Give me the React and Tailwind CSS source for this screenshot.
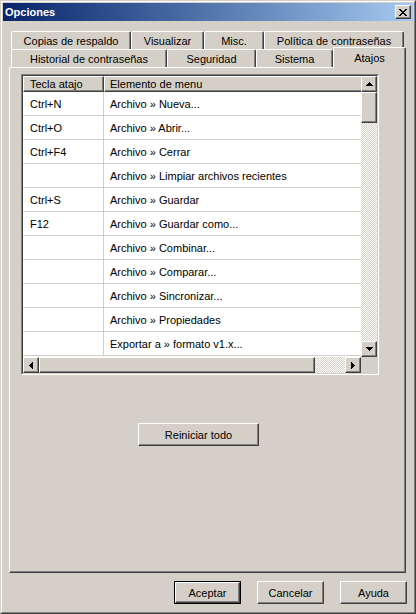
import React from 'react';

const raised =
  'border border-t-white border-l-white border-r-[#404040] border-b-[#404040] shadow-[inset_-1px_-1px_0_#808080] bg-[#d4d0c8]';
const checker =
  'bg-[image:repeating-conic-gradient(#d4d0c8_0%_25%,#ffffff_0%_50%)] bg-[length:2px_2px]';

const rows = [
  ['Ctrl+N', 'Archivo » Nueva...'],
  ['Ctrl+O', 'Archivo » Abrir...'],
  ['Ctrl+F4', 'Archivo » Cerrar'],
  ['', 'Archivo » Limpiar archivos recientes'],
  ['Ctrl+S', 'Archivo » Guardar'],
  ['F12', 'Archivo » Guardar como...'],
  ['', 'Archivo » Combinar...'],
  ['', 'Archivo » Comparar...'],
  ['', 'Archivo » Sincronizar...'],
  ['', 'Archivo » Propiedades'],
  ['', 'Exportar a » formato v1.x...'],
];

const Arrow = ({ dir }) => {
  // classic 7x4 triangle made of pixel rows
  const bars = [1, 3, 5, 7];
  if (dir === 'up' || dir === 'down') {
    const order = dir === 'up' ? bars : [...bars].reverse();
    return (
      <svg width="7" height="4" viewBox="0 0 7 4" shapeRendering="crispEdges">
        {order.map((w, i) => (
          <rect key={i} x={(7 - w) / 2} y={i} width={w} height="1" fill="#000" />
        ))}
      </svg>
    );
  }
  const order = dir === 'left' ? bars : [...bars].reverse();
  return (
    <svg width="4" height="7" viewBox="0 0 4 7" shapeRendering="crispEdges">
      {order.map((h, i) => (
        <rect key={i} x={i} y={(7 - h) / 2} width="1" height={h} fill="#000" />
      ))}
    </svg>
  );
};

const CloseGlyph = () => {
  const px = [
    [0, 0], [1, 0], [6, 0], [7, 0],
    [1, 1], [2, 1], [5, 1], [6, 1],
    [2, 2], [3, 2], [4, 2], [5, 2],
    [3, 3], [4, 3],
    [2, 4], [3, 4], [4, 4], [5, 4],
    [1, 5], [2, 5], [5, 5], [6, 5],
    [0, 6], [1, 6], [6, 6], [7, 6],
  ];
  return (
    <svg width="8" height="7" viewBox="0 0 8 7" shapeRendering="crispEdges">
      {px.map(([x, y]) => (
        <rect key={`${x}-${y}`} x={x} y={y} width="1" height="1" fill="#000" />
      ))}
    </svg>
  );
};

const Tab = ({ label, width }) => (
  <div
    className={`flex h-[18px] shrink-0 items-center justify-center rounded-t-[2px] border-t border-l border-r border-t-white border-l-white border-r-[#404040] pt-[1px] shadow-[inset_-1px_0_0_#808080] ${width}`}
  >
    {label}
  </div>
);

const ScrollButton = ({ dir }) => (
  <div className={`flex h-[16px] w-[16px] shrink-0 items-center justify-center ${raised}`}>
    <Arrow dir={dir} />
  </div>
);

const Button = ({ children, isDefault, width = 'w-[67px]' }) => (
  <div className={`${width} h-[23px] ${isDefault ? 'border border-black' : ''}`}>
    <div className={`flex h-full w-full items-center justify-center pt-[1px] ${raised}`}>{children}</div>
  </div>
);

const App = () => {
  return (
    <div className="h-[614px] w-[416px] border border-t-[#d4d0c8] border-l-[#d4d0c8] border-r-[#404040] border-b-[#404040] bg-[#d4d0c8] font-['Liberation_Sans',Arial,sans-serif] text-[11px] leading-none text-black">
      <div className="h-full w-full border border-t-white border-l-white border-r-[#808080] border-b-[#808080] p-[1px]">
        {/* title bar */}
        <div className="flex h-[18px] items-center justify-between bg-gradient-to-r from-[#0a246a] to-[#a6caf0] pl-[2px] pr-[2px]">
          <span className="text-[11px] font-bold text-white">Opciones</span>
          <div className={`flex h-[14px] w-[16px] items-center justify-center ${raised}`}>
            <CloseGlyph />
          </div>
        </div>

        {/* tab control */}
        <div className="ml-[6px] mt-[10px] w-[397px]">
          <div className="flex pl-[2px]">
            <Tab label="Copias de respaldo" width="w-[120px]" />
            <Tab label="Visualizar" width="w-[73px]" />
            <Tab label="Misc." width="w-[60px]" />
            <Tab label="Política de contraseñas" width="w-[140px]" />
          </div>
          <div className="flex h-[18px] pl-[2px]">
            <Tab label="Historial de contraseñas" width="w-[156px]" />
            <Tab label="Seguridad" width="w-[89px]" />
            <Tab label="Sistema" width="w-[77px]" />
            <div className="relative z-10 -mt-[2px] flex h-[21px] w-[73px] shrink-0 items-start justify-center rounded-t-[2px] border-t border-l border-r border-t-white border-l-white border-r-[#404040] bg-[#d4d0c8] pt-[5px] shadow-[inset_-1px_0_0_#808080]">
              Atajos
            </div>
          </div>

          <div className="h-[506px] border border-t-white border-l-white border-r-[#404040] border-b-[#404040] pl-[11px] pt-[6px] shadow-[inset_-1px_-1px_0_#808080]">
            {/* list view */}
            <div className="h-[301px] w-[358px] border border-t-[#808080] border-l-[#808080] border-r-white border-b-white">
              <div className="flex h-full w-full flex-col border border-t-[#404040] border-l-[#404040] border-r-[#d4d0c8] border-b-[#d4d0c8]">
                <div className="flex h-[281px]">
                  <div className="w-[338px] overflow-hidden bg-white">
                    <div className="flex h-[16px] w-[420px]">
                      <div className={`flex w-[81px] shrink-0 items-center pl-[6px] pt-[1px] ${raised}`}>Tecla atajo</div>
                      <div className={`flex w-[339px] shrink-0 items-center pl-[5px] pt-[1px] ${raised}`}>Elemento de menu</div>
                    </div>
                    {rows.map(([key, item]) => (
                      <div key={item} className="flex h-[24px] w-[420px] border-b border-[#d4d0c8] pt-[2px]">
                        <div className="-mt-[2px] flex w-[81px] shrink-0 items-center border-r border-[#d4d0c8] pl-[7px] pt-[2px]">{key}</div>
                        <div className="flex flex-1 items-center pl-[6px]">{item}</div>
                      </div>
                    ))}
                  </div>
                  <div className="flex w-[16px] flex-col">
                    <ScrollButton dir="up" />
                    <div className={`h-[31px] w-[16px] ${raised}`} />
                    <div className={`flex-1 ${checker}`} />
                    <ScrollButton dir="down" />
                  </div>
                </div>
                <div className="flex h-[16px]">
                  <ScrollButton dir="left" />
                  <div className={`h-[16px] w-[276px] ${raised}`} />
                  <div className={`w-[30px] ${checker}`} />
                  <ScrollButton dir="right" />
                  <div className="w-[16px] bg-[#d4d0c8]" />
                </div>
              </div>
            </div>

            <div className="ml-[117px] mt-[48px]">
              <Button width="w-[121px]">Reiniciar todo</Button>
            </div>
          </div>
        </div>

        {/* dialog buttons */}
        <div className="mt-[8px] flex justify-end gap-[16px] pr-[6px]">
          <Button isDefault>Aceptar</Button>
          <Button>Cancelar</Button>
          <Button>Ayuda</Button>
        </div>
      </div>
    </div>
  );
};

export default App;
